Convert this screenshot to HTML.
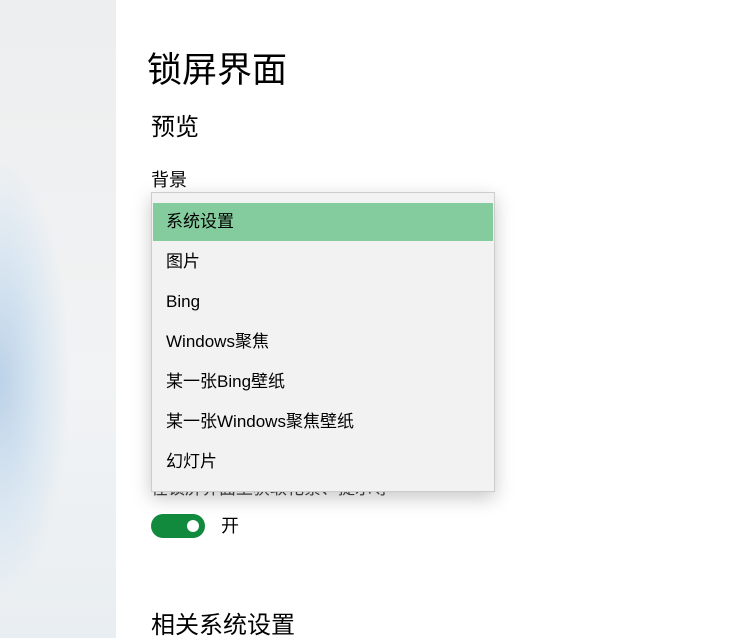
<!DOCTYPE html>
<html><head><meta charset="utf-8"><style>
body{margin:0;width:753px;height:638px;overflow:hidden;background:#fff;position:relative;font-family:"Liberation Sans","Noto Sans CJK SC",sans-serif;color:#000}
.side{position:absolute;left:0;top:0;width:116px;height:638px;background:radial-gradient(ellipse 70px 220px at 0px 380px,#bcd2e8 0%,#d9e6f1 55%,rgba(240,242,244,0) 100%),linear-gradient(#eceeef,#f1f3f4 60%,#e9eef2)}
.t{position:absolute;white-space:nowrap}
.dd{position:absolute;left:151px;top:192px;width:342px;height:298px;background:#f2f2f2;border:1px solid #ccc;box-shadow:0 6px 18px rgba(0,0,0,.22);z-index:2}
.it{position:absolute;left:14px;font-size:17px;line-height:20px}
.hl{position:absolute;left:1px;top:10px;width:340px;height:38px;background:#84cc9d}
.tg{position:absolute;left:151px;top:514px;width:54px;height:24px;border-radius:12px;background:#128a3e}
.tg i{position:absolute;right:6px;top:6px;width:12px;height:12px;border-radius:50%;background:#fff}
.clip{position:absolute;left:140px;top:491px;width:400px;height:6px;overflow:hidden}
</style></head><body>
<div class="side"></div>
<div class="t" style="left:147px;top:49px;font-size:35px;line-height:44px">锁屏界面</div>
<div class="t" style="left:151px;top:113px;font-size:24px;line-height:30px">预览</div>
<div class="t" style="left:151px;top:168px;font-size:18px;line-height:24px">背景</div>
<div class="clip"><div class="t" style="left:11px;top:-12px;font-size:17px;line-height:20px;color:#444">在锁屏界面上获取花絮、提示等</div></div>
<div class="tg"><i></i></div>
<div class="t" style="left:221px;top:515px;font-size:18px;line-height:22px">开</div>
<div class="t" style="left:151px;top:611px;font-size:24px;line-height:30px">相关系统设置</div>
<div class="dd">
<div class="hl"></div>
<div class="it" style="top:19px">系统设置</div>
<div class="it" style="top:59px">图片</div>
<div class="it" style="top:99px">Bing</div>
<div class="it" style="top:139px">Windows聚焦</div>
<div class="it" style="top:179px">某一张Bing壁纸</div>
<div class="it" style="top:219px">某一张Windows聚焦壁纸</div>
<div class="it" style="top:259px">幻灯片</div>
</div>
</body></html>
